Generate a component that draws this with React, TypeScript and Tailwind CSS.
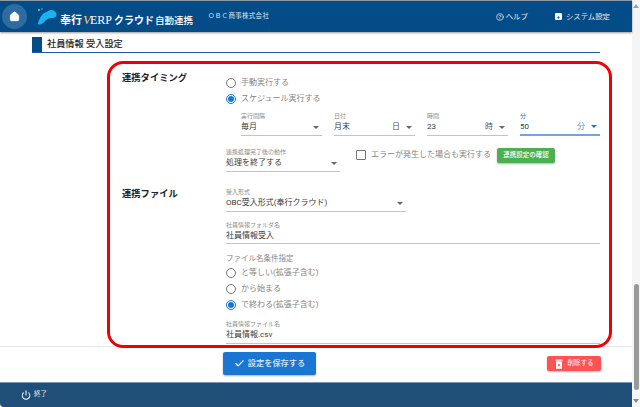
import React from "react";
import { Check, Power, Home, CircleHelp } from "lucide-react";

const Radio = ({ checked, label }: { checked?: boolean; label: string }) => (
  <div className="flex h-[16px] items-center">
    <span className={`flex h-[10px] w-[10px] shrink-0 items-center justify-center rounded-full border ${checked ? "border-[#1976d2]" : "border-[#757575]"}`}>
      {checked && <span className="h-[5.5px] w-[5.5px] rounded-full bg-[#1976d2]" />}
    </span>
    <span className="ml-[5px] text-[8px] leading-none text-[#858585]">{label}</span>
  </div>
);

const Field = ({ label, value, suffix, arrow, active, className, valueHeight }: { label: string; value: string; suffix?: string; arrow?: boolean; active?: boolean; className: string; valueHeight?: string }) => (
  <div className={className}>
    <div className={`h-[11px] whitespace-nowrap text-[6px] leading-[11px] ${active ? "text-[#1976d2]" : "text-[#8a8a8a]"}`}>{label}</div>
    <div className={`flex ${valueHeight ?? "h-[15px]"} items-center pb-[2px] text-[8px] leading-none text-[#3a3a3a] ${active ? "border-b-2 border-[#6ea6e0]" : "border-b border-[#c4c4c4]"}`}>
      <span className="flex-1 whitespace-nowrap">{value}</span>
      {suffix && <span className={active ? "text-[#4a90d9]" : "text-[#555]"}>{suffix}</span>}
      {arrow && <span className={`ml-[6px] mr-[3px] h-0 w-0 border-x-[3px] border-t-[3px] border-x-transparent ${active ? "border-t-[#1976d2]" : "border-t-[#666]"}`} />}
    </div>
  </div>
);

export default function App() {
  return (
    <div className="relative flex h-[407px] w-[640px] overflow-hidden bg-white font-['Roboto','Noto_Sans_CJK_JP',sans-serif]">
      <div className="flex h-full w-[632px] flex-col">
        <header className="z-10 flex h-[32px] shrink-0 items-center border-t border-[#8a9aaa] bg-[#034c88] shadow-[0_1px_2px_rgba(0,0,0,0.4)]">
          <div className="ml-[2px] flex h-[25px] w-[25px] items-center justify-center rounded-full bg-[#2f6b9e]">
            <Home size={11} fill="white" stroke="white" />
          </div>
          <svg width="21" height="18" viewBox="0 0 21 18" className="ml-[10px]">
            <circle cx="2" cy="2" r="1" fill="#6fd0f5" />
            <circle cx="5" cy="1" r="0.7" fill="#6fd0f5" />
            <path d="M1 15 C2 12 3 9 5 7 C7 4 9 5 11 3 C14 1 18 2 19 5 C20.5 8 18 10 15 10 C12 10 10 11 8 13 C6 15.5 4 17 2 16.5 C1 16.3 0.7 15.7 1 15 Z" fill="#19b4ee" />
          </svg>
          <div className="ml-[2px] mt-[5px] flex items-baseline whitespace-nowrap text-white">
            <span className="text-[11px] font-bold leading-none">奉行</span>
            <span className="ml-[1px] font-['Liberation_Serif',serif] text-[13px] italic leading-none text-[#f2d36b]">V</span>
            <span className="ml-[-1px] font-['Liberation_Serif',serif] text-[12px] leading-none">ERP</span>
            <span className="ml-[2px] text-[10px] font-bold leading-none">クラウド</span>
            <span className="ml-[1px] text-[9.5px] font-medium leading-none">自動連携</span>
          </div>
          <span className="ml-[15px] text-[6.5px] tracking-[0.3px] text-[#dce6f0]">ＯＢＣ商事株式会社</span>
          <div className="flex-1" />
          <CircleHelp size={8} className="text-white" />
          <span className="ml-[2px] text-[7.4px] text-[#e4ebf2]">ヘルプ</span>
          <span className="ml-[27px] flex h-[7px] w-[7px] items-center justify-center rounded-[1px] bg-white text-[6px] font-bold leading-none text-[#034c88]">+</span>
          <span className="ml-[4px] mr-[22px] text-[7.4px] text-[#e4ebf2]">システム設定</span>
        </header>

        <main className="min-h-0 flex-1 overflow-hidden border-b border-[#e4e4e4] pl-[32px] pr-[32px] pt-[5px]">
          <div className="flex h-[16px] items-stretch border-b-[1.5px] border-[#1d5f9a]">
            <span className="w-[10px] bg-[#034c88]" />
            <span className="ml-[5px] text-[9.2px] font-medium leading-[14px] text-[#222]">社員情報 受入設定</span>
          </div>

          <div className="ml-[90px] mt-[17px] h-[15px] whitespace-nowrap text-[9.3px] font-bold leading-[15px] text-[#222]">連携タイミング</div>

          <div className="ml-[194px] mt-[-10px]">
            <Radio label="手動実行する" />
            <Radio checked label="スケジュール実行する" />
            <div className="ml-[15px] mt-[3px] flex gap-[12px]">
              <Field className="w-[81px]" label="実行間隔" value="毎月" arrow />
              <Field className="w-[81px]" label="日付" value="月末" suffix="日" arrow />
              <Field className="w-[81px]" label="時間" value="23" suffix="時" arrow />
              <Field className="w-[80px]" label="分" value="50" suffix="分" arrow active />
            </div>
            <div className="mt-[10px] flex items-center">
              <Field className="w-[114px]" label="連携処理完了後の動作" value="処理を終了する" arrow />
              <span className="ml-[16px] mt-[-8px] h-[10px] w-[10px] rounded-[1px] border border-[#757575]" />
              <span className="ml-[5px] mt-[-8px] whitespace-nowrap text-[8px] leading-none text-[#858585]">エラーが発生した場合も実行する</span>
              <button className="ml-[6px] mt-[-8px] h-[15px] w-[58px] rounded-[2px] bg-[#4caf50] text-center text-[6.5px] font-medium leading-none text-white shadow-[0_1px_2px_rgba(0,0,0,0.3)]">連携設定の確認</button>
            </div>
          </div>

          <div className="mt-[14px] flex">
            <div className="ml-[90px] w-[104px] shrink-0 whitespace-nowrap text-[9.3px] font-bold leading-[15px] text-[#222]">連携ファイル</div>
            <div className="w-[374px]">
              <Field className="w-[180px]" label="受入形式" value="OBC受入形式(奉行クラウド)" arrow />
              <Field className="mt-[7px] w-[374px]" valueHeight="h-[14px]" label="社員情報フォルダ名" value="社員情報受入" />
              <div className="mt-[8px] h-[13px] text-[7.5px] leading-[13px] text-[#858585]">ファイル名条件指定</div>
              <div>
                <Radio label="と等しい(拡張子含む)" />
                <Radio label="から始まる" />
                <Radio checked label="で終わる(拡張子含む)" />
              </div>
              <Field className="mt-[5px] w-[374px]" label="社員情報ファイル名" value="社員情報.csv" />
            </div>
          </div>
        </main>

        <div className="relative flex h-[35px] shrink-0 items-center">
          <button className="ml-[223px] mb-[2px] flex h-[23px] w-[93px] items-center justify-center rounded-[2px] bg-[#1976d2] text-[8.2px] font-medium text-[#dbe9f8] shadow-[0_1px_2px_rgba(0,0,0,0.3)]">
            <Check size={11} strokeWidth={2.5} className="mr-[3px] text-white" />
            設定を保存する
          </button>
          <button className="ml-[231px] mb-[2px] flex h-[15px] w-[54px] items-center justify-center rounded-[2px] bg-[#ff5252] text-[6.5px] font-medium text-[#ffe0e0] shadow-[0_1px_2px_rgba(0,0,0,0.25)]">
            <svg width="8" height="10" viewBox="0 0 8 10" className="mr-[5px]">
              <rect x="0.5" y="0.5" width="7" height="1.2" fill="white" />
              <rect x="1" y="2.3" width="6" height="7.5" fill="white" />
              <path d="M3 5 L5 7.5 M5 5 L3 7.5" stroke="#ff5252" strokeWidth="0.9" />
            </svg>
            削除する
          </button>
        </div>

        <footer className="flex h-[25px] shrink-0 items-center rounded-bl-[4px] border-t border-[#7d98b3] bg-[#1f4e79] pl-[21px]">
          <Power size={10} strokeWidth={2.5} className="text-white" />
          <span className="ml-[3px] text-[6.5px] text-[#dfe7ef]">終了</span>
        </footer>
      </div>

      <aside className="flex w-[8px] flex-col items-center bg-[#f5f5f5]">
        <span className="mt-[4px] h-0 w-0 border-x-[3px] border-b-[4px] border-x-transparent border-b-[#a0a0a0]" />
        <div className="flex-1" />
        <span className="mb-[9px] h-[106px] w-[5px] rounded-[3px] bg-[#999]" />
        <span className="mb-[4px] h-0 w-0 border-x-[3px] border-t-[4px] border-x-transparent border-t-[#888]" />
      </aside>

      <div className="pointer-events-none absolute left-[107px] top-[61px] h-[287px] w-[505px] rounded-[16px] border-[3px] border-[#f00000]" />
    </div>
  );
}
